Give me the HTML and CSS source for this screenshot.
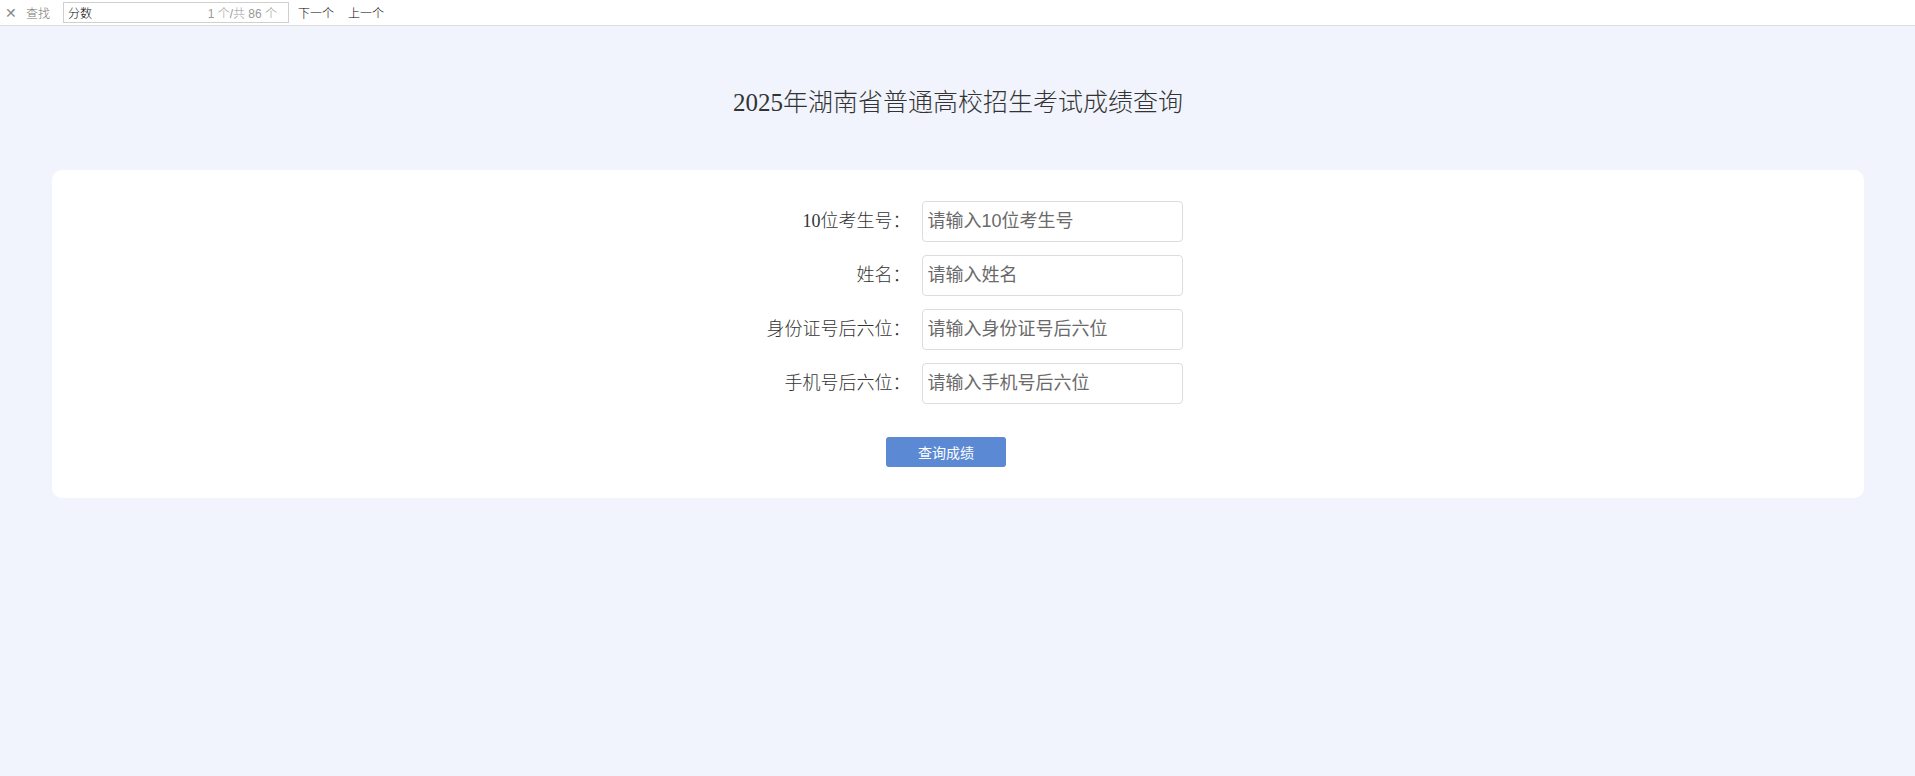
FILE: index.html
```html
<!DOCTYPE html>
<html lang="zh-CN">
<head>
<meta charset="UTF-8">
<meta name="viewport" content="width=device-width, initial-scale=1.0">
<title>2025年湖南省普通高校招生考试成绩查询</title>
<link rel="stylesheet" href="styles.css">
</head>
<body>
<div class="find-bar">
    <span class="find-close">&#x2715;</span>
    <span class="find-label">查找</span>
    <div class="find-box">
        <span class="find-text">分数</span>
        <span class="find-count">1 个/共 86 个</span>
    </div>
    <span class="find-link">下一个</span>
    <span class="find-link">上一个</span>
</div>

<div class="page">
    <h1 class="title">2025年湖南省普通高校招生考试成绩查询</h1>
    <div class="card">
        <form class="query-form">
            <label class="form-label" for="ksh">10位考生号：</label>
            <input class="form-input" type="text" id="ksh" placeholder="请输入10位考生号">

            <label class="form-label" for="xm">姓名：</label>
            <input class="form-input" type="text" id="xm" placeholder="请输入姓名">

            <label class="form-label" for="sfz">身份证号后六位：</label>
            <input class="form-input" type="text" id="sfz" placeholder="请输入身份证号后六位">

            <label class="form-label" for="sj">手机号后六位：</label>
            <input class="form-input" type="text" id="sj" placeholder="请输入手机号后六位">
        </form>
        <div class="actions">
            <button type="button" class="query-button">查询成绩</button>
        </div>
    </div>
</div>
</body>
</html>
```

FILE: styles.css
```css
body {
    margin: 0;
    padding: 0;
    background-color: #f1f4fc;
    font-family: "Liberation Serif", "Noto Sans CJK SC", serif;
    color: #333;
}

/* browser find bar */
.find-bar {
    height: 25px;
    background-color: #fff;
    border-bottom: 1px solid #dcdcdc;
    display: flex;
    align-items: center;
    font-family: "Liberation Sans", "Noto Sans CJK SC", sans-serif;
    font-size: 12px;
    font-weight: 300;
}

.find-close {
    width: 13px;
    margin-left: 5px;
    color: #888;
    font-size: 14px;
}

.find-label {
    margin-left: 8px;
    color: #777;
}

.find-box {
    margin-left: 13px;
    width: 226px;
    height: 21px;
    box-sizing: border-box;
    border: 1px solid #cfcfcf;
    display: flex;
    align-items: center;
    justify-content: space-between;
    padding: 0 11px 0 4px;
}

.find-text {
    color: #000;
}

.find-count {
    color: #999;
}

.find-link {
    margin-left: 9px;
    margin-right: 5px;
    color: #000;
}

/* main content */
.page {
    padding: 61px 51px 0 52px;
}

.title {
    margin: 0;
    text-align: center;
    font-size: 25px;
    line-height: 32px;
    font-weight: 300;
    color: #333;
}

.card {
    margin-top: 51px;
    background-color: #fff;
    border-radius: 10px;
    padding: 31px 0 31px;
}

.query-form {
    display: grid;
    grid-template-columns: 188px 261px;
    justify-content: center;
    row-gap: 13px;
}

.form-label {
    text-align: right;
    padding-right: 11px;
    font-size: 18px;
    font-weight: 300;
    line-height: 41px;
    color: #333;
}

.form-input {
    height: 41px;
    box-sizing: border-box;
    border: 1px solid #ddd;
    border-radius: 4px;
    padding: 0 5px;
    font-family: "Liberation Sans", "Noto Sans CJK SC", sans-serif;
    font-size: 18px;
    color: #333;
    outline: none;
}

.form-input::placeholder {
    color: #6a6a6a;
}

.actions {
    margin-top: 33px;
    display: flex;
    justify-content: center;
}

.query-button {
    width: 120px;
    height: 30px;
    margin-left: -24px;
    background-color: #5b89d4;
    color: #fff;
    border: none;
    border-radius: 3px;
    font-family: "Liberation Sans", "Noto Sans CJK SC", sans-serif;
    font-size: 14px;
    cursor: pointer;
}
```
